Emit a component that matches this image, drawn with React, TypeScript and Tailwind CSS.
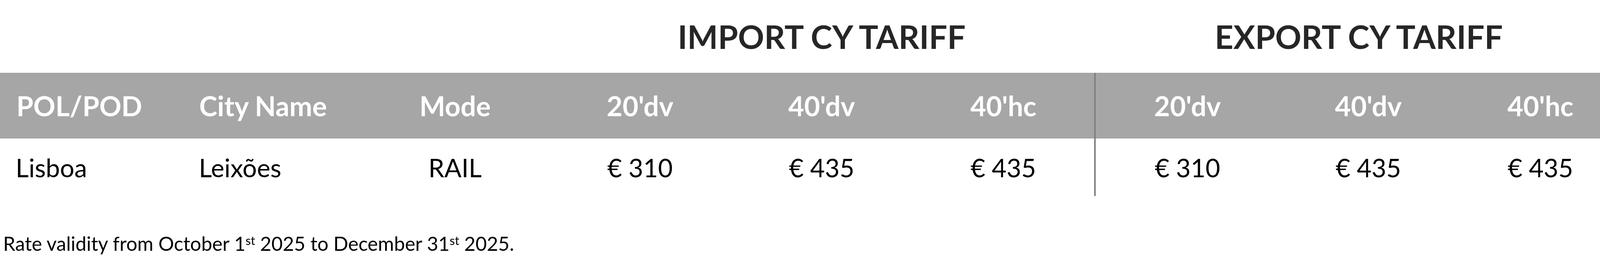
import React from 'react';

const cols = 'grid grid-cols-[480px_444px_482px_465px_465px_465px_474px_456px_425px]';

const sizes = ["20'dv", "40'dv", "40'hc"];
const rates = ['€ 310', '€ 435', '€ 435'];

const App = () => {
    return (
        <div className="w-[4156px] h-[690px] bg-white font-['Lato',sans-serif] overflow-hidden">
            {/* tariff titles */}
            <div className={`${cols} h-[186px] pt-[52px]`}>
                <div className="col-start-4 col-span-3 text-center text-[83px] leading-none font-bold text-[#262626]">
                    IMPORT CY TARIFF
                </div>
                <div className="col-span-3 text-center text-[83px] leading-none font-bold text-[#262626]">
                    EXPORT CY TARIFF
                </div>
            </div>

            {/* header band */}
            <div className={`${cols} h-[168px] bg-[#a6a6a6] text-white font-bold text-[70px] leading-none`}>
                <div className="flex items-center pl-[42px]">POL/POD</div>
                <div className="flex items-center pl-[30px]">City Name</div>
                <div className="flex items-center justify-center">Mode</div>
                {sizes.map((c, i) => (
                    <div key={'ih' + i} className="flex items-center justify-center">{c}</div>
                ))}
                {sizes.map((c, i) => (
                    <div
                        key={'eh' + i}
                        className={`flex items-center justify-center ${i === 0 ? 'border-l-4 border-[#7f7f7f]' : ''}`}
                    >
                        {c}
                    </div>
                ))}
            </div>

            {/* rates row */}
            <div className={`${cols} h-[147px] text-black text-[65px] leading-none`}>
                <div className="pt-[42px] pl-[40px]">Lisboa</div>
                <div className="pt-[42px] pl-[29px]">Leixões</div>
                <div className="pt-[42px] text-center">RAIL</div>
                {rates.map((r, i) => (
                    <div key={'ir' + i} className="pt-[42px] text-center">{r}</div>
                ))}
                {rates.map((r, i) => (
                    <div
                        key={'er' + i}
                        className={`pt-[42px] text-center ${i === 0 ? 'border-l-4 border-[#7f7f7f]' : ''}`}
                    >
                        {r}
                    </div>
                ))}
            </div>

            <p className="mt-[96px] pl-[8px] text-[50px] leading-none text-black">
                Rate validity from October 1<sup className="text-[31px]">st</sup> 2025 to December 31<sup className="text-[31px]">st</sup> 2025.
            </p>
        </div>
    );
};

export default App;
